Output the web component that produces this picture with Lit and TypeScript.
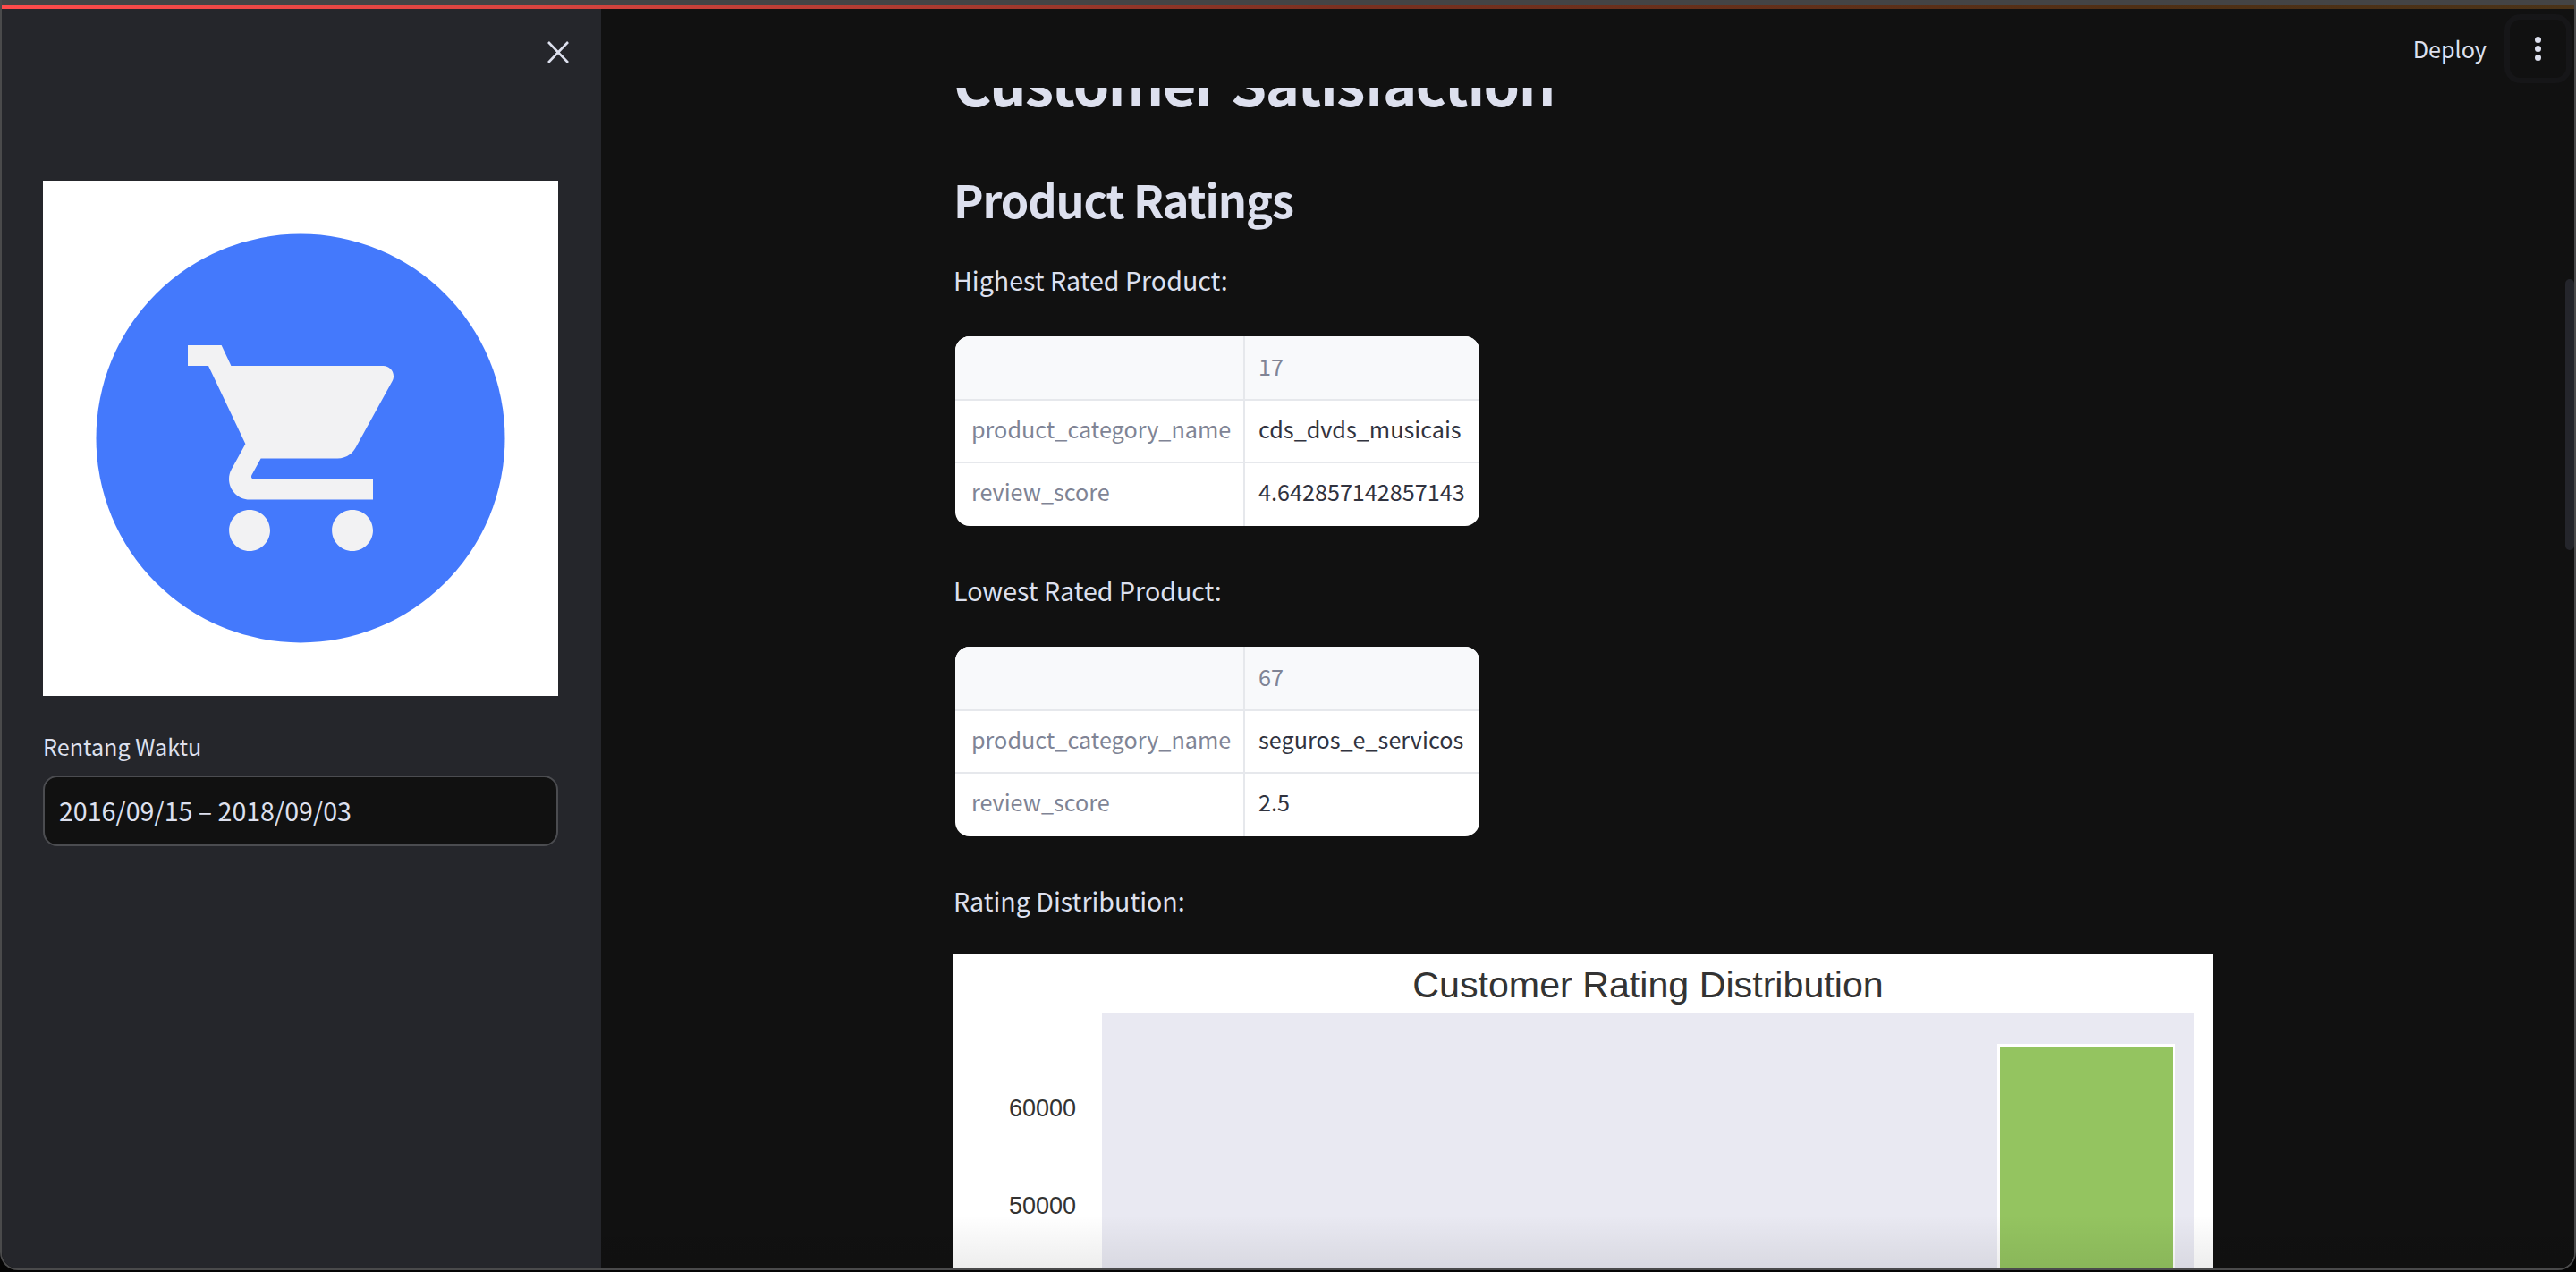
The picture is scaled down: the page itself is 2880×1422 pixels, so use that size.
import { css, html, LitElement } from "lit";
import { customElement } from "lit/decorators.js";

const CART =
  "M7 18c-1.1 0-1.99.9-1.99 2S5.9 22 7 22s2-.9 2-2-.9-2-2-2zM1 2v2h2l3.6 7.59-1.35 2.45c-.16.28-.25.61-.25.96 0 1.1.9 2 2 2h12v-2H7.42c-.14 0-.25-.11-.25-.25l.03-.12.9-1.63h7.45c.75 0 1.41-.41 1.75-1.03l3.58-6.49c.08-.14.12-.31.12-.48 0-.55-.45-1-1-1H5.21l-.94-2H1zm16 16c-1.1 0-1.99.9-1.99 2s.89 2 1.99 2 2-.9 2-2-.9-2-2-2z";

const rated = (id: string, name: string, score: string) => html`
  <div class="table-wrap">
    <table>
      <tr class="head"><th></th><th>${id}</th></tr>
      <tr><th>product_category_name</th><td>${name}</td></tr>
      <tr><th>review_score</th><td>${score}</td></tr>
    </table>
  </div>
`;

@customElement("app-root")
export class AppRoot extends LitElement {
  static styles = css`
    :host {
      display: block;
      width: 2880px;
      height: 1422px;
      background: #050505;
      font-family: "Noto Sans CJK SC", "Noto Sans", sans-serif;
      color: #dde0ee;
    }

    .window {
      box-sizing: border-box;
      height: 1420px;
      display: flex;
      flex-direction: column;
      overflow: hidden;
      border: solid #4a4a4b;
      border-width: 0 2px 2px;
      border-radius: 0 0 20px 20px;
    }

    .chrome {
      height: 6px;
      flex: none;
      margin: 0 -2px;
      background: #444445;
    }

    .deco {
      height: 4px;
      flex: none;
      margin: 0 -2px;
      background: linear-gradient(
        90deg,
        #ff4b4b 0%,
        #d9443f 21%,
        #7a3020 52%,
        #4f2f14 83%,
        #4a3318 100%
      );
    }

    .body {
      flex: 1;
      display: flex;
      min-height: 0;
    }

    .sidebar {
      box-sizing: border-box;
      width: 670px;
      flex: none;
      padding: 0 46px;
      background: #25262b;
    }

    .close-row {
      height: 192px;
      box-sizing: border-box;
      padding-top: 36px;
      display: flex;
      justify-content: flex-end;
      margin-right: -10px;
    }

    .close-row svg {
      display: block;
      width: 24px;
      height: 24px;
    }

    .logo {
      display: block;
      width: 576px;
      height: 576px;
    }

    .field-label {
      margin: 36px 0 13px;
      font-size: 25.2px;
      line-height: 40px;
    }

    .date-input {
      box-sizing: border-box;
      width: 576px;
      height: 79px;
      padding: 0 16px 2px;
      display: flex;
      align-items: center;
      border: 2px solid #4b4c50;
      border-radius: 16px;
      background: #111;
      font-size: 28.6px;
    }

    .main {
      flex: 1;
      position: relative;
      overflow: hidden;
      background: #111;
    }

    .header {
      position: absolute;
      inset: 0 0 auto 0;
      height: 88px;
      padding-right: 3px;
      display: flex;
      align-items: center;
      justify-content: flex-end;
      background: #111;
    }

    .deploy {
      margin-right: 20px;
      font-size: 25.2px;
    }

    .menu {
      box-sizing: border-box;
      width: 75px;
      height: 77px;
      display: flex;
      flex-direction: column;
      align-items: center;
      justify-content: center;
      gap: 3px;
      border: 6px solid #161618;
      border-radius: 18px;
    }

    .menu i {
      width: 7px;
      height: 7px;
      border-radius: 50%;
      background: #dde0ee;
    }

    .scrollbar {
      position: absolute;
      top: 302px;
      right: 0;
      width: 10px;
      height: 303px;
      border-radius: 5px;
      background: #24252b;
    }

    .fade {
      position: absolute;
      inset: auto 0 0 0;
      height: 60px;
      background: linear-gradient(180deg, rgba(0, 0, 0, 0), rgba(0, 0, 0, 0.07));
    }

    .content {
      width: 1408px;
      margin-left: 394px;
    }

    h2,
    h3,
    p {
      margin: 0;
    }

    h2 {
      padding-top: 31px;
      font-size: 64.8px;
      letter-spacing: -1.5px;
      line-height: 100px;
      font-weight: 600;
      color: #dde0ee;
    }

    h3 {
      margin: 46px 0 30px;
      font-size: 50.4px;
      letter-spacing: -1.1px;
      line-height: 72px;
      font-weight: 600;
    }

    p {
      font-size: 28.6px;
      line-height: 48px;
    }

    .table-wrap {
      box-sizing: border-box;
      width: 586px;
      height: 212px;
      margin: 39px 0 48px 2px;
      overflow: hidden;
      border-radius: 16px;
      background: #fff;
    }

    table {
      width: 586px;
      table-layout: fixed;
      border-collapse: collapse;
      font-size: 25.2px;
    }

    tr {
      height: 70.6px;
    }

    th,
    td {
      box-sizing: border-box;
      padding: 0 18px 6px;
      text-align: left;
      font-weight: 400;
      white-space: nowrap;
      border: 2px solid #e6e8ec;
    }

    .head th {
      padding-bottom: 4px;
      background: #f8f9fb;
    }

    tr:last-child th,
    tr:last-child td {
      padding-bottom: 8px;
      border-bottom: 0;
    }

    th:last-child,
    td {
      padding-left: 15px;
    }

    th {
      color: #808495;
    }

    td {
      color: #31333f;
    }

    th:first-child {
      width: 323px;
      border-left: 0;
    }

    tr:first-child th {
      border-top: 0;
    }

    th:last-child,
    td:last-child {
      border-right: 0;
    }

    .chart {
      display: block;
      width: 1408px;
      height: 360px;
      margin-top: 35px;
      background: #fff;
    }

    .chart text {
      font-family: "Liberation Sans", Arial, sans-serif;
      fill: #333;
    }

    .chart .title {
      font-size: 41.2px;
      text-anchor: middle;
    }

    .chart .tick {
      font-size: 27px;
      text-anchor: end;
    }
  `;

  render() {
    return html`
      <div class="window">
        <div class="chrome"></div>
        <div class="deco"></div>
        <div class="body">
          <aside class="sidebar">
            <div class="close-row">
              <svg viewBox="0 0 24 24" fill="none" stroke="#dde0ee" stroke-width="2.6">
                <path d="M1 1l22 23M23 1L1 24" />
              </svg>
            </div>
            <svg class="logo" viewBox="0 0 576 576">
              <rect width="576" height="576" fill="#fff" />
              <circle cx="288" cy="288" r="228.5" fill="#4479fc" />
              <g transform="translate(150.5 161) scale(11.5)">
                <path d=${CART} fill="#f2f2f3" />
              </g>
            </svg>
            <div class="field-label">Rentang Waktu</div>
            <div class="date-input">2016/09/15 – 2018/09/03</div>
          </aside>
          <main class="main">
            <div class="content">
              <h2>Customer Satisfaction</h2>
              <h3>Product Ratings</h3>
              <p>Highest Rated Product:</p>
              ${rated("17", "cds_dvds_musicais", "4.642857142857143")}
              <p>Lowest Rated Product:</p>
              ${rated("67", "seguros_e_servicos", "2.5")}
              <p>Rating Distribution:</p>
              <svg class="chart" viewBox="0 0 1408 360">
                <text class="title" x="776.5" y="49">Customer Rating Distribution</text>
                <rect x="166" y="67" width="1221" height="293" fill="#e9e9f2" />
                <rect x="1168.5" y="102.5" width="196" height="300" fill="#94c460" stroke="#fff" stroke-width="3" />
                <text class="tick" x="137" y="182">60000</text>
                <text class="tick" x="137" y="291">50000</text>
              </svg>
            </div>
            <div class="fade"></div>
            <div class="header">
              <span class="deploy">Deploy</span>
              <div class="menu"><i></i><i></i><i></i></div>
            </div>
            <div class="scrollbar"></div>
          </main>
        </div>
      </div>
    `;
  }
}

declare global {
  interface HTMLElementTagNameMap {
    "app-root": AppRoot;
  }
}
